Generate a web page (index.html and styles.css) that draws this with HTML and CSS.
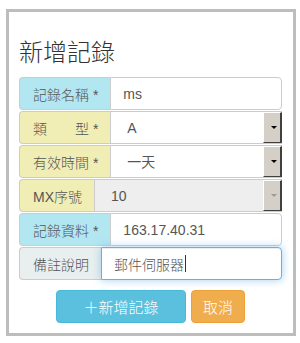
FILE: index.html
```html
<!DOCTYPE html>
<html lang="zh-Hant">
<head>
    <meta charset="UTF-8">
    <title>新增記錄</title>
    <link rel="stylesheet" href="styles.css">
</head>
<body>
    <div class="panel">
        <h3 class="title">新增記錄</h3>

        <form class="record-form">
            <div class="row">
                <span class="addon addon-info">記錄名稱 *</span>
                <input class="field" type="text" value="ms">
            </div>

            <div class="row">
                <span class="addon addon-warn">類　　型 *</span>
                <div class="select-wrap">
                    <select class="field select">
                        <option>A</option>
                        <option>CNAME</option>
                        <option>MX</option>
                    </select>
                </div>
            </div>

            <div class="row">
                <span class="addon addon-warn">有效時間 *</span>
                <div class="select-wrap">
                    <select class="field select">
                        <option>一天</option>
                        <option>一小時</option>
                    </select>
                </div>
            </div>

            <div class="row">
                <span class="addon addon-warn">MX序號</span>
                <div class="select-wrap disabled">
                    <select class="field select" disabled>
                        <option>10</option>
                    </select>
                </div>
            </div>

            <div class="row">
                <span class="addon addon-info">記錄資料 *</span>
                <input class="field" type="text" value="163.17.40.31">
            </div>

            <div class="row">
                <span class="addon addon-plain">備註說明</span>
                <div class="field focused">郵件伺服器<span class="caret"></span></div>
            </div>

            <div class="actions">
                <button type="button" class="btn btn-info">＋新增記錄</button>
                <button type="button" class="btn btn-warning">取消</button>
            </div>
        </form>
    </div>
</body>
</html>
```

FILE: styles.css
```css
* {
    box-sizing: border-box;
}

body {
    margin: 0;
    padding: 9px 0 0 6px;
    font-family: "Liberation Sans", "Noto Sans CJK TC", sans-serif;
    font-size: 14px;
    color: #555;
    background: #fff;
}

/* Outer frame */
.panel {
    width: 290px;
    height: 327px;
    border: 3px solid #bdbdbd;
    padding: 0 11px 0 10px;
}

.title {
    margin: 0 0 12px;
    padding-top: 25px;
    font-family: "Noto Sans CJK TC", sans-serif;
    font-size: 24px;
    font-weight: 300;
    line-height: 28px;
    color: #333;
}

/* Input groups */
.row {
    display: flex;
    height: 33px;
    margin-bottom: 1px;
}

.addon {
    display: flex;
    align-items: center;
    padding: 0 12px 0 13px;
    border: 1px solid #ccc;
    border-right: none;
    border-radius: 4px 0 0 4px;
    color: #555;
    font-weight: 300;
    white-space: nowrap;
}

.addon-info {
    background-color: #b2e6f1;
}

.addon-warn {
    background-color: #f0eeb5;
}

.addon-plain {
    background-color: #e9efee;
}

.field {
    flex: 1;
    min-width: 0;
    height: 33px;
    padding: 0 12px;
    border: 1px solid #ccc;
    border-radius: 0 4px 4px 0;
    background: #fff;
    font-family: inherit;
    font-size: 14px;
    color: #555;
    outline: none;
}

/* Old style dropdowns */
.select-wrap {
    position: relative;
    flex: 1;
    display: flex;
}

.select {
    appearance: none;
    -webkit-appearance: none;
    padding-left: 16px;
    border-radius: 0;
}

.select:disabled {
    background-color: #eee;
    opacity: 1;
    color: #555;
}

.select-wrap::after {
    content: "";
    position: absolute;
    top: 1px;
    right: 0;
    bottom: 1px;
    width: 16px;
    background: #d4d0c8;
    border-top: 1px solid #fff;
    border-left: 1px solid #fff;
    border-right: 2px solid #404040;
    border-bottom: 1px solid #404040;
    pointer-events: none;
}

.select-wrap::before {
    content: "";
    position: absolute;
    top: 15px;
    right: 5px;
    border-left: 3px solid transparent;
    border-right: 3px solid transparent;
    border-top: 3px solid #000;
    z-index: 1;
    pointer-events: none;
}

.select-wrap.disabled::before {
    border-top-color: #9a9a9a;
}

/* Focused remark field */
.focused {
    display: flex;
    align-items: center;
    padding-left: 12px;
    border-color: #66afe9;
    box-shadow: inset 0 1px 1px rgba(0, 0, 0, .075), 0 0 8px rgba(102, 175, 233, .6);
    font-family: "Noto Sans CJK TC", sans-serif;
    font-weight: 300;
}

.caret {
    display: inline-block;
    width: 1px;
    height: 17px;
    margin-left: 1px;
    background: #333;
}

/* Buttons */
.actions {
    display: flex;
    justify-content: center;
    gap: 5px;
    margin-top: 10px;
}

.btn {
    height: 33px;
    padding: 0 10px;
    border: 1px solid transparent;
    border-radius: 4px;
    font-family: "Noto Sans CJK TC", sans-serif;
    font-size: 15px;
    font-weight: 300;
    color: #fff;
    cursor: pointer;
}

.btn-info {
    width: 130px;
    background-color: #5bc0de;
    border-color: #46b8da;
}

.btn-warning {
    width: 54px;
    background-color: #f0ad4e;
    border-color: #eea236;
}
```
